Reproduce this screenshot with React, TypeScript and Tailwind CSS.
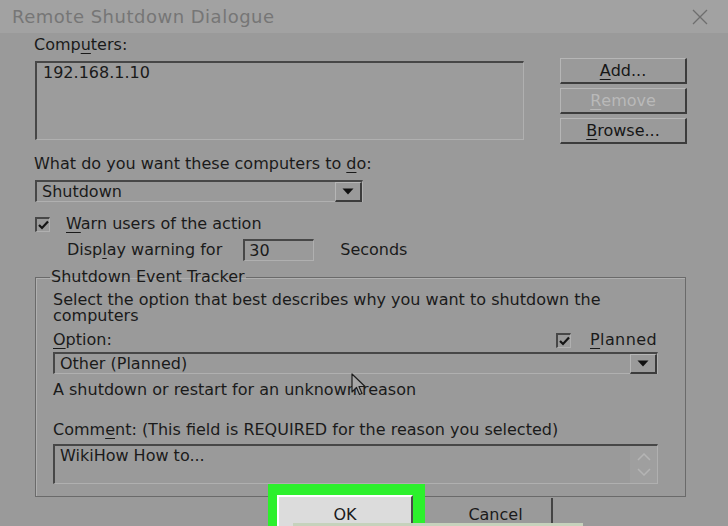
import React from "react";

const font = { fontFamily: '"DejaVu Sans", Verdana, sans-serif' };

const sunken =
  "border-t-2 border-l-2 border-t-[#474747] border-l-[#474747] border-b border-r border-b-[#b0b0b0] border-r-[#b0b0b0]";
const raised =
  "border-t border-l border-t-[#b6b6b6] border-l-[#b6b6b6] border-b-2 border-r-2 border-b-[#3c3c3c] border-r-[#3c3c3c]";

function U({ children }: { children: React.ReactNode }) {
  return <span className="underline decoration-1 underline-offset-[3px]">{children}</span>;
}

function Check() {
  return (
    <div className={`w-[15px] h-[15px] flex items-center justify-center ${sunken}`}>
      <svg width="11" height="10" viewBox="0 0 11 10">
        <path d="M1 5 L4 8 L10 1.5" fill="none" stroke="#151515" strokeWidth="2.2" />
      </svg>
    </div>
  );
}

function Arrow() {
  return (
    <div className={`w-[27px] h-[20px] flex items-center justify-center ${raised}`}>
      <svg width="12" height="7" viewBox="0 0 12 7">
        <path d="M0.5 0.5 H11.5 L6 6.5 Z" fill="#111" />
      </svg>
    </div>
  );
}

function SideButton({ children, disabled }: { children: React.ReactNode; disabled?: boolean }) {
  return (
    <div
      className={`h-[26px] w-[127px] flex items-center justify-center text-[16px] ${raised} ${
        disabled ? "text-[#b9b9b9]" : "text-[#161616]"
      }`}
    >
      {children}
    </div>
  );
}

export default function App() {
  return (
    <div
      className="relative w-[728px] h-[526px] overflow-hidden bg-[#9a9a9a] text-[#1a1a1a] text-[16px] leading-[18px]"
      style={font}
    >
      {/* title bar */}
      <div className="h-[33px] bg-[#a2a2a2] flex items-center justify-between pl-[12px] pr-[20px]">
        <span className="text-[18px] tracking-[0.5px] text-[#767676]">Remote Shutdown Dialogue</span>
        <svg width="16" height="16" viewBox="0 0 16 16">
          <path d="M1 1 L15 15 M15 1 L1 15" stroke="#6e6e6e" strokeWidth="1.3" />
        </svg>
      </div>

      <div className="pl-[34px] pr-[42px]">
        <div className="mt-[3px]">
          Comp<U>u</U>ters:
        </div>

        <div className="flex items-start justify-between mt-[4px]">
          <div className={`ml-px mt-[3px] w-[489px] h-[79px] bg-[#9c9c9c] px-[6px] pt-[1px] ${sunken}`}>
            192.168.1.10
          </div>
          <div className="flex flex-col gap-[4px] mr-[-1px]">
            <SideButton>
              <U>A</U>dd...
            </SideButton>
            <SideButton disabled>
              <U>R</U>emove
            </SideButton>
            <SideButton>
              <U>B</U>rowse...
            </SideButton>
          </div>
        </div>

        <div className="mt-[11px]">
          What do you want these computers to <U>d</U>o:
        </div>
        <div className={`ml-px mt-[7px] w-[328px] h-[22px] flex items-center justify-between pl-[5px] ${sunken}`}>
          <span>Shutdown</span>
          <Arrow />
        </div>

        <div className="mt-[13px] flex items-center gap-[16px] ml-px">
          <Check />
          <span>
            <U>W</U>arn users of the action
          </span>
        </div>

        <div className="mt-[6px] flex items-center ml-[33px]">
          <span>
            Disp<U>l</U>ay warning for
          </span>
          <div className={`ml-[21px] w-[71px] h-[22px] flex items-center pl-[4px] ${sunken}`}>30</div>
          <span className="ml-[26px]">Seconds</span>
        </div>

        <fieldset className="mt-[7px] ml-px border border-[#6a6a6a] shadow-[inset_1px_1px_0_#b0b0b0] pl-[17px] pr-[27px] pb-[12px]">
          <legend className="ml-[-3px] px-[1px]">Shutdown Event Tracker</legend>
          <div className="mt-[6px] leading-[16px]">
            Select the option that best describes why you want to shutdown the computers
          </div>
          <div className="mt-[7px] flex items-center justify-between h-[18px]">
            <span>
              <U>O</U>ption:
            </span>
            <div className="flex items-center gap-[19px] mr-[1px]">
              <Check />
              <span className="tracking-[0.4px]">
                <U>P</U>lanned
              </span>
            </div>
          </div>
          <div className={`mt-[3px] h-[22px] flex items-center justify-between pl-[5px] ${sunken}`}>
            <span>Other (Planned)</span>
            <Arrow />
          </div>
          <div className="mt-[7px]">A shutdown or restart for an unknown reason</div>
          <div className="mt-[22px]">
            Comm<U>e</U>nt: (This field is REQUIRED for the reason you selected)
          </div>
          <div className={`mt-[5px] h-[40px] flex justify-between pl-[5px] ${sunken}`}>
            <span className="pt-px">WikiHow How to...</span>
            <div className="w-[27px] bg-[#9f9f9f] flex flex-col items-center justify-around py-[3px]">
              <svg width="14" height="8" viewBox="0 0 14 8">
                <path d="M1 7 L7 1 L13 7" fill="none" stroke="#b4b4b4" strokeWidth="1.5" />
              </svg>
              <svg width="14" height="8" viewBox="0 0 14 8">
                <path d="M1 1 L7 7 L13 1" fill="none" stroke="#b4b4b4" strokeWidth="1.5" />
              </svg>
            </div>
          </div>
        </fieldset>

        <div className="flex items-start -mt-[13px] relative">
          <div className="ml-[234px] border-[#2cf02c] border-t-[11px] border-l-[9px] border-r-[12px] bg-[#2cf02c]">
            <div className="w-[136px] h-[40px] bg-[#dcdcdc] border-t-2 border-l-2 border-white border-r-2 border-r-[#4a4a4a] flex justify-center pt-[9px]">
              <span>
                O<U>K</U>
              </span>
            </div>
          </div>
          <div className="ml-[15px] mt-[14px] w-[113px] h-[40px] border-r-2 border-r-[#444] flex justify-center pt-[8px]">
            <span>
              <U>C</U>ancel
            </span>
          </div>
        </div>
      </div>

      {/* mouse pointer */}
      <svg className="absolute left-[351px] top-[373px]" width="16" height="24" viewBox="0 0 16 24">
        <path
          d="M1 1 L1 19 L5.5 14.5 L8.5 21.5 L11 20.5 L8 13.5 L14 13.5 Z"
          fill="#a6a6a6"
          stroke="#1e1e1e"
          strokeWidth="1.2"
          strokeLinejoin="round"
        />
      </svg>

      {/* faint strip along the bottom edge */}
      <div className="absolute bottom-0 left-[293px] w-[290px] h-[3px] bg-[#c6d2bc]" />
    </div>
  );
}
